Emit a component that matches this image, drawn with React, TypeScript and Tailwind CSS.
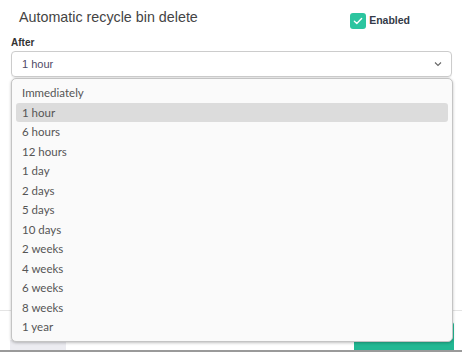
import React from "react";

const options = [
  "Immediately",
  "1 hour",
  "6 hours",
  "12 hours",
  "1 day",
  "2 days",
  "5 days",
  "10 days",
  "2 weeks",
  "4 weeks",
  "6 weeks",
  "8 weeks",
  "1 year",
];

export default function App() {
  return (
    <div className="relative w-[462px] h-[352px] overflow-hidden bg-white font-['Liberation_Sans',Arial,sans-serif]">
      <div className="flex flex-col h-full">
        <div className="flex items-start justify-between pl-[19px] pr-[52px] pt-[9px]">
          <h1 className="text-[14.3px] leading-[17px] text-[#444]">Automatic recycle bin delete</h1>
          <label className="flex items-center gap-[3px] mt-[4px]">
            <span className="w-[16px] h-[16px] rounded-[3px] bg-[#2cc59f] flex items-center justify-center">
              <svg width="10" height="8" viewBox="0 0 10 8" fill="none">
                <path d="M1.4 4.2 L3.8 6.4 L8.6 1.6" stroke="white" strokeWidth="1.4" strokeLinecap="round" strokeLinejoin="round" />
              </svg>
            </span>
            <span className="text-[10.5px] font-bold text-[#333a48]">Enabled</span>
          </label>
        </div>
        <div className="px-[11px] mt-[8px]">
          <div className="text-[10px] leading-[12px] font-bold text-[#333]">After</div>
          <div className="mt-[2px] h-[26px] w-[441px] border border-[#ccc] rounded-[4px] flex items-center justify-between pl-[10px] pr-[9px] shadow-[0_1px_1px_rgba(0,0,0,0.08)]">
            <span className="text-[11px] text-[#4f4a66]">1 hour</span>
            <svg width="8" height="6" viewBox="0 0 8 6" fill="none">
              <path d="M1 1.5 L4 4.5 L7 1.5" stroke="#666" strokeWidth="1.1" />
            </svg>
          </div>
        </div>
        <div className="flex-1" />
        <div className="border-t border-[#e4e4e4] h-[40px] flex items-end justify-between pl-[10px] pr-[8px]">
          <div className="w-[56px] h-[10px] bg-[#ececf1]" />
          <div className="w-[100px] h-[28px] bg-[#22b893] rounded-t-[3px]" />
        </div>
        <div className="h-[2px] bg-[#9a9a9a]" />
      </div>

      <div className="absolute left-[11px] top-[78px] w-[442px] h-[264px] bg-[#fafafa] border border-[#c4c4c4] rounded-[5px] shadow-[0_1px_3px_rgba(0,0,0,0.25)] px-[4px] pt-[4px] pb-[4px] font-['Lato','Noto_Sans',sans-serif]">
        {options.map((o) => (
          <div
            key={o}
            className={
              "h-[19.5px] flex items-center pl-[6px] text-[11.5px] text-[#555] rounded-[3px] " +
              (o === "1 hour" ? "bg-[#dcdcdc]" : "")
            }
          >
            {o}
          </div>
        ))}
      </div>
    </div>
  );
}
